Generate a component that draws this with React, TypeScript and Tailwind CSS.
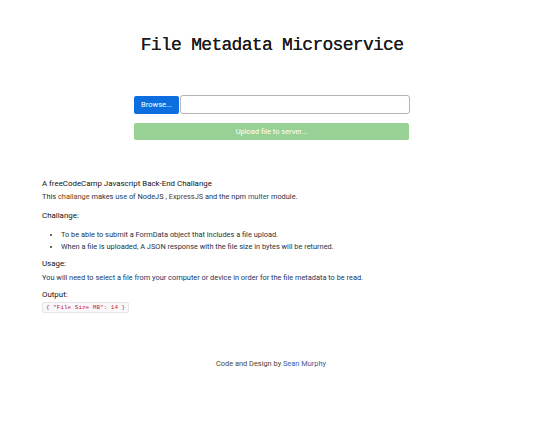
const bullets = [
  "To be able to submit a FormData object that includes a file upload.",
  "When a file is uploaded, A JSON response with the file size in bytes will be returned.",
];

export default function App() {
  return (
    <div className="w-[550px] h-[426px] bg-white text-[#2b2f36] font-['Roboto','Liberation_Sans',sans-serif] overflow-hidden">
      <h1 className="pt-[33px] pr-[6px] text-center font-['Liberation_Mono','Courier_New',monospace] text-[18px] leading-[24px] tracking-[-0.7px] text-[#1a1a1a] [text-shadow:0_0_0.6px_#1a1a1a]">
        File Metadata Microservice
      </h1>

      {/* upload form */}
      <form className="ml-[134px] w-[276px] mt-[38px]">
        <div className="flex h-[19px]">
          <button type="button" className="w-[45px] h-[18px] mt-[1px] bg-[#0d6fdf] text-white text-[7.5px] rounded-[2px] flex items-center justify-center">
            Browse...
          </button>
          <div className="flex-1 ml-[1px] border border-[#b5b5b5] rounded-[3px] bg-white" />
        </div>
        <button type="button" className="w-[275px] h-[17px] mt-[9px] bg-[#97d196] text-white text-[7.5px] rounded-[2px] flex items-center justify-center">
          Upload file to server...
        </button>
      </form>

      {/* description */}
      <div className="ml-[42px] mt-[38px] text-[7.4px] leading-[12px]">
        <h2 className="text-[7.9px] text-[#111]">A freeCodeCamp Javascript Back-End Challange</h2>
        <p className="mt-[1px] text-[#26323f]">
          This <span className="text-[#6e4214]">challange</span> makes <span className="text-[#24466e]">use</span> of NodeJS , <span className="text-[#5e3a14]">ExpressJS</span> and the npm <span className="text-[#24508a]">multer</span> module.
        </p>
        <h3 className="mt-[7px] text-[7.9px] text-[#111]">Challange:</h3>
        <ul className="mt-[7px] list-disc pl-[19px] text-[#26323f] marker:text-[#333]">
          {bullets.map((b, i) => (
            <li key={i}>{b}</li>
          ))}
        </ul>
        <h3 className="mt-[5px] text-[7.9px] text-[#111]">Usage:</h3>
        <p className="mt-[2px] text-[#1c3560]">
          You will need to select a file from your computer or device in order for the file metadata to be read.
        </p>
        <h3 className="mt-[5px] text-[7.9px] text-[#111]">Output:</h3>
        <code className="inline-block mt-[1px] px-[3px] h-[11px] leading-[10px] border border-[#e5e5ea] bg-[#f8f8fa] rounded-[2px] text-[#c7254e] text-[6px] font-['Liberation_Mono',monospace]">
          {'{ "File Size MB": 14 }'}
        </code>
      </div>

      <footer className="mt-[45px] text-center text-[7.4px] leading-[12px] text-[#4e3f30] pr-[8px]">
        Code and Design by <span className="text-[#3d5aa0]">Sean Murphy</span>
      </footer>
    </div>
  );
}
